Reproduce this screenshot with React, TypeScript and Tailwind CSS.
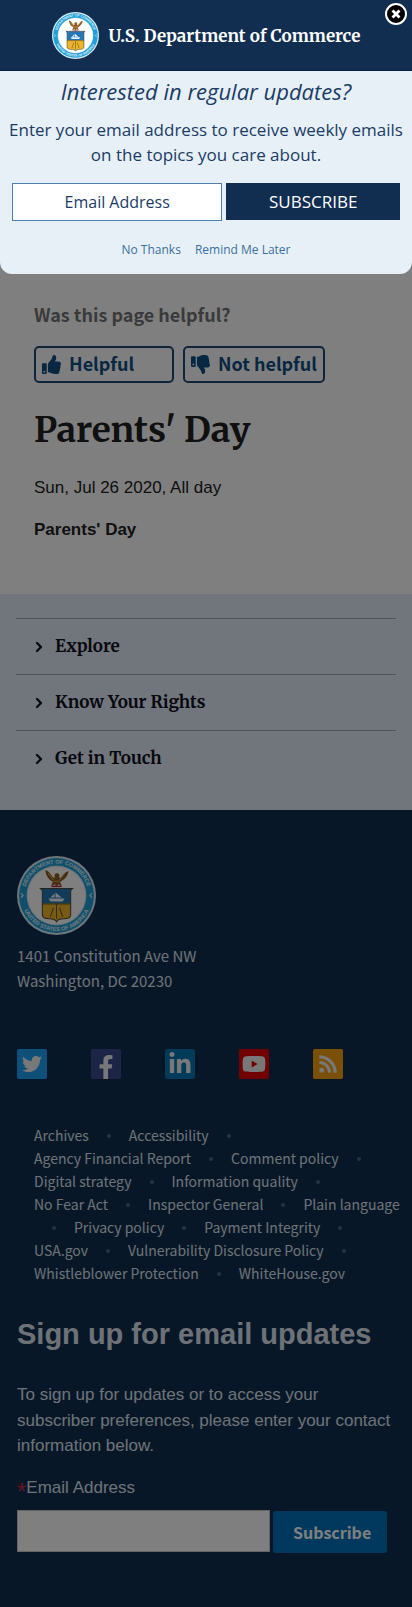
import { ChevronRight } from "lucide-react";
import { FaFacebookF, FaLinkedinIn, FaRss, FaThumbsDown, FaThumbsUp, FaTwitter, FaYoutube } from "react-icons/fa";

const serif = "font-['Merriweather','DejaVu_Serif_Condensed','DejaVu_Serif',serif]";
const source = "font-['Source_Sans_Pro','Noto_Sans_CJK_SC',sans-serif]";

function Seal({ id, className }: { id: string; className: string }) {
  return (
    <svg viewBox="0 0 78 78" className={className} aria-hidden="true">
      <defs>
        <path id={`${id}-top`} d="M7.500 39a31.500 31.500 0 0 1 63 0" />
        <path id={`${id}-bottom`} d="M4 39a35 35 0 0 0 70 0" />
      </defs>
      <circle cx="39" cy="39" r="39" fill="#d9edf5" />
      <circle cx="39" cy="39" r="37" fill="#1f9fd8" />
      <circle cx="39" cy="39" r="29.500" fill="#cfe6ee" />
      <circle cx="39" cy="39" r="28.500" fill="#fff" />
      <g fill="#e6f6fc" fontSize="5.500" fontWeight="700" fontFamily="Liberation Sans, sans-serif" textAnchor="middle">
        <text><textPath href={`#${id}-top`} startOffset="50%">DEPARTMENT OF COMMERCE</textPath></text>
        <text><textPath href={`#${id}-bottom`} startOffset="50%">UNITED STATES OF AMERICA</textPath></text>
      </g>
      <path d="M28 14c2 0 4 2 6 5 1 2 2.500 3 3.500 2-1-2 0-4 2-4s3 2 2 4c1 1 2.500 0 4-2 2-3 3.500-4 5.500-4-1 4-3 7.500-6 9l-2.500 2 2 3.500-4-1.500-1.500 3-1.500-3-4 1.500 2-4c-4-2-7-6-7.500-11.500z" fill="#8b5a24" />
      <path d="M31 17l5 7M47 17l-5 7M36 25h6" stroke="#d8a64a" strokeWidth="1" />
      <path d="M34 30h10" stroke="#b5282e" strokeWidth="1.500" />
      <path d="M23 32h32l-2 2v14H25V34z" fill="#2477b3" />
      <path d="M25 47h28v11c0 3-3 4-7 4-4 0-6 1-7 3-1-2-3-3-7-3-4 0-7-1-7-4z" fill="#eeb62b" />
      <path d="M23 32h32l-2 2v24c0 3-3 4-7 4-4 0-6 1-7 3-1-2-3-3-7-3-4 0-7-1-7-4V34z" fill="none" stroke="#4b4a36" strokeWidth="1" />
      <path d="M25 47.500h28M39 48v14M33 60l3-9M45 60l-3-9" stroke="#6b5a21" strokeWidth="1" />
      <path d="M31 42h16l-2 3H33zM33 41l4-4v4zm5 0v-5l6 5z" fill="#f4f8fa" />
      <path d="M4 37l2 2-2 2M74 37l-2 2 2 2" stroke="#fff" fill="none" />
    </svg>
  );
}

const sections = ["Explore", "Know Your Rights", "Get in Touch"];

const social = [
  { label: "Twitter", Icon: FaTwitter, box: "items-center bg-[#1da1f2]", icon: "size-5" },
  { label: "Facebook", Icon: FaFacebookF, box: "items-end bg-[#3b4a8c]", icon: "size-6" },
  { label: "LinkedIn", Icon: FaLinkedinIn, box: "items-center bg-[#0077b5]", icon: "size-6" },
  { label: "YouTube", Icon: FaYoutube, box: "items-center bg-[#e60000]", icon: "size-6" },
  { label: "RSS", Icon: FaRss, box: "items-center bg-[#f5a00c]", icon: "size-5" },
];

const links = [
  "Archives", "Accessibility", "Agency Financial Report", "Comment policy", "Digital strategy",
  "Information quality", "No Fear Act", "Inspector General", "Plain language", "Privacy policy",
  "Payment Integrity", "USA.gov", "Vulnerability Disclosure Policy", "Whistleblower Protection", "WhiteHouse.gov",
];

function UpdatesDialog() {
  return (
    <div role="dialog" aria-labelledby="updates-title" className="absolute inset-x-0 top-0 overflow-hidden rounded-b-xl bg-[#e7f0f6] font-['Open_Sans',sans-serif] text-[#1b3c66]">
      <div className="flex h-[71px] items-center justify-center gap-2.5 border-b border-[#0b2140] bg-[#112e51]">
        <Seal id="seal-header" className="size-[47px]" />
        <span className={`${serif} pt-1 text-[17px] font-bold text-white`}>U.S. Department of Commerce</span>
      </div>
      <button aria-label="Close" className="absolute top-[3px] right-[5px] flex size-[22px] items-center justify-center rounded-full border-2 border-white bg-black">
        <svg viewBox="0 0 10 10" className="size-2.5" aria-hidden="true">
          <path d="M1.500 1.500l7 7M8.500 1.500l-7 7" stroke="#fff" strokeWidth="2.800" />
        </svg>
      </button>
      <form className="px-3 pt-1 pb-4 text-center" onSubmit={(e) => e.preventDefault()}>
        <h2 id="updates-title" className="text-[22px] leading-8 italic">Interested in regular updates?</h2>
        <p className="-mx-2 mt-2.5 text-[17px] leading-[25px]">
          Enter your email address to receive weekly emails<br />on the topics you care about.
        </p>
        <div className="mt-4 flex gap-1">
          <input type="email" aria-label="Email Address" placeholder="Email Address" className="h-[38px] min-w-0 flex-[6] border border-[#4d7fb3] bg-white text-center text-base placeholder:text-[#1b3c66]" />
          <button className="h-[37px] min-w-0 flex-[5] bg-[#112e51] text-[17px] text-white">SUBSCRIBE</button>
        </div>
        <div className="mt-[21px] flex justify-center gap-3.5 text-xs leading-4 text-[#39709f]">
          <a href="#no-thanks">No Thanks</a>
          <a href="#later">Remind Me Later</a>
        </div>
      </form>
    </div>
  );
}

export default function App() {
  return (
    <div className="relative bg-white font-['Liberation_Sans',Arial,sans-serif] text-[17px] text-[#212121]">
      <main className="px-[34px] pt-[300px] pb-[51px]">
        <p className={`${source} text-lg leading-7 font-bold text-[#757575]`}>Was this page helpful?</p>
        <div className={`${source} mt-[18px] flex gap-[9px] text-lg font-bold text-[#0f4f86]`}>
          <button className="flex h-[37px] w-[140px] items-center gap-2 rounded-[5px] border-2 border-[#1c4a75] px-1.5"><FaThumbsUp className="size-[19px]" /><span className="pb-1">Helpful</span></button>
          <button className="flex h-[37px] items-center gap-2 rounded-[5px] border-2 border-[#1c4a75] px-1.5 whitespace-nowrap"><FaThumbsDown className="size-[19px]" /><span className="pb-1">Not helpful</span></button>
        </div>
        <h1 className={`${serif} mt-6 text-[35px] leading-[46px] font-bold`}>Parents' Day</h1>
        <p className="mt-[22px] leading-[26px]">Sun, Jul 26 2020, All day</p>
        <p className="mt-4 leading-[26px] font-bold">Parents' Day</p>
      </main>

      <nav className="bg-[#e2edf8] px-4 py-6">
        {sections.map((s) => (
          <button key={s} className={`${serif} flex h-14 w-full items-center gap-2 border-t border-[#a0a4ad] pl-[15px] text-[17px] font-bold text-[#112]`}>
            <ChevronRight className="size-4" strokeWidth={3.5} />{s}
          </button>
        ))}
      </nav>

      <footer className="bg-[#112e51] px-[17px] pt-[46px] pb-14 text-[#dce4ef]">
        <Seal id="seal-footer" className="size-[79px]" />
        <address className={`${source} mt-2 text-[15px] leading-[25px] not-italic`}>1401 Constitution Ave NW<br />Washington, DC 20230</address>

        <div className="mt-14 flex gap-11">
          {social.map(({ label, Icon, box, icon }) => (
            <a key={label} href={`#${label.toLowerCase()}`} aria-label={label} className={`flex size-[30px] justify-center rounded-[2px] text-[#f0f0f0] ${box}`}>
              <Icon className={icon} />
            </a>
          ))}
        </div>

        <ul className={`${source} mt-[45px] -mr-2 flex flex-wrap pl-[17px] text-sm leading-[23px]`}>
          {links.flatMap((l, i) => [
            <li key={l}><a href={`#link-${i}`} className="whitespace-nowrap">{l}</a></li>,
            i < links.length - 1 && <li key={`${l}-dot`} aria-hidden="true" className="flex w-10 items-center justify-center"><span className="size-1 rounded-full bg-[#4c6585]" /></li>,
          ])}
        </ul>

        <h2 className="mt-[29px] text-[29px] leading-10 font-bold">Sign up for email updates</h2>
        <p className="mt-7 leading-normal">To sign up for updates or to access your subscriber preferences, please enter your contact information below.</p>
        <form onSubmit={(e) => e.preventDefault()}>
          <label htmlFor="signup-email" className="mt-4 flex h-[26px] leading-[26px]"><span className="text-2xl leading-[34px] text-[#c5283d]">*</span>Email Address</label>
          <div className="mt-[9px] flex gap-[3px]">
            <input id="signup-email" type="email" className="h-[42px] w-[253px] border border-[#c8c8c8] bg-white px-2 text-[#212121]" />
            <button className={`${source} mt-px h-[42px] rounded-[3px] bg-[#0071bc] pr-4 pl-5 text-base font-bold text-white`}>Subscribe</button>
          </div>
        </form>
      </footer>

      <div className="absolute inset-0 bg-black/50" />
      <UpdatesDialog />
    </div>
  );
}
